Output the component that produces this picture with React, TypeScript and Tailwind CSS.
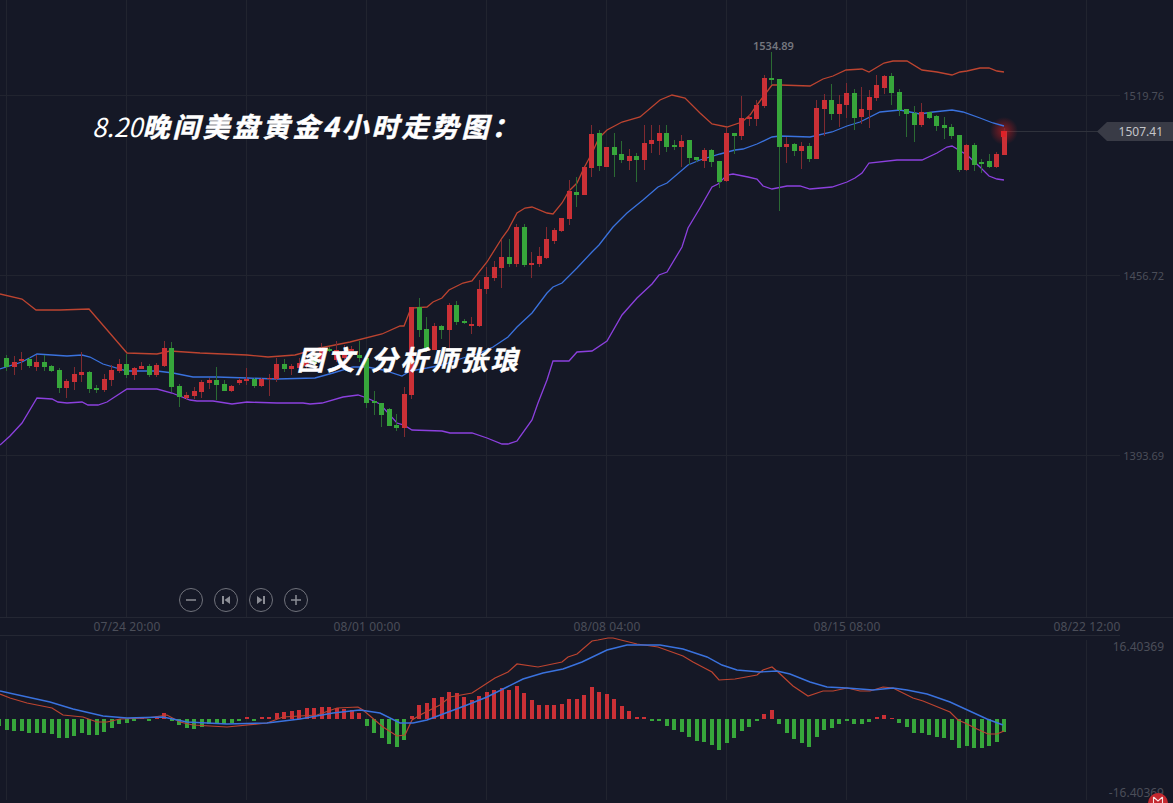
type Candle = [number, number, number, number, number, number];

// [up(1=red)/down(0=green), wick top, body top, body bottom, wick bottom]
const candleRows: [number, number, number, number, number][] = [
  [0, 355, 358, 367, 371], [1, 356, 362, 367, 375], [1, 352, 359, 361, 370], [0, 357, 359, 366, 368],
  [1, 355, 362, 367, 371], [0, 355, 362, 367, 371], [0, 365, 366, 371, 372], [0, 368, 370, 388, 393],
  [1, 379, 381, 388, 398], [1, 367, 374, 382, 390], [1, 352, 372, 375, 382], [0, 371, 372, 389, 393],
  [0, 385, 388, 390, 393], [1, 374, 379, 390, 392], [1, 365, 370, 380, 386], [1, 359, 364, 371, 373],
  [0, 354, 364, 375, 378], [1, 367, 368, 375, 380], [1, 362, 366, 369, 369], [0, 364, 366, 375, 377],
  [1, 363, 365, 375, 377], [1, 341, 348, 366, 367], [0, 342, 348, 387, 392], [0, 384, 386, 397, 407],
  [1, 392, 395, 398, 400], [1, 387, 391, 396, 399], [1, 380, 382, 392, 398], [1, 378, 380, 383, 389],
  [0, 367, 380, 385, 400], [0, 380, 384, 391, 391], [1, 385, 386, 391, 392], [1, 378, 380, 383, 385],
  [1, 368, 379, 381, 385], [0, 378, 379, 386, 388], [1, 378, 379, 386, 387], [1, 374, 378, 379, 396],
  [1, 358, 364, 379, 382], [0, 359, 364, 369, 372], [1, 364, 366, 369, 375], [1, 358, 363, 368, 373],
  [1, 360, 362, 366, 370], [0, 355, 358, 364, 368], [1, 343, 349, 360, 360], [0, 347, 349, 351, 352],
  [1, 341, 350, 360, 362], [1, 345, 351, 358, 360], [1, 346, 349, 351, 353], [0, 341, 355, 358, 362],
  [0, 358, 358, 403, 408], [0, 391, 401, 403, 415], [0, 403, 403, 415, 427], [0, 408, 409, 426, 426],
  [0, 414, 425, 428, 431], [1, 387, 394, 428, 437], [1, 307, 307, 395, 399], [0, 298, 307, 330, 337],
  [0, 317, 329, 350, 352], [1, 323, 326, 350, 350], [0, 325, 326, 330, 339], [1, 303, 305, 330, 350],
  [0, 301, 305, 322, 325], [0, 319, 321, 323, 324], [1, 317, 324, 326, 334], [1, 280, 289, 326, 327],
  [1, 267, 277, 289, 294], [1, 261, 267, 278, 281], [1, 240, 257, 268, 288], [0, 239, 257, 264, 267],
  [1, 224, 227, 264, 267], [0, 224, 227, 265, 267], [1, 252, 263, 265, 278], [1, 247, 256, 264, 267],
  [1, 227, 239, 258, 259], [1, 228, 230, 241, 244], [1, 218, 218, 231, 232], [1, 180, 191, 219, 225],
  [0, 177, 192, 195, 207], [1, 167, 167, 195, 195], [1, 125, 134, 168, 177], [0, 130, 133, 166, 171],
  [1, 147, 147, 167, 167], [0, 133, 147, 155, 177], [0, 141, 154, 160, 163], [1, 149, 156, 161, 170],
  [0, 153, 156, 160, 182], [1, 125, 143, 160, 170], [1, 125, 140, 144, 153], [1, 125, 133, 141, 155],
  [0, 125, 133, 147, 152], [0, 140, 145, 147, 150], [1, 135, 141, 147, 167], [0, 140, 140, 158, 165],
  [0, 157, 157, 160, 162], [1, 148, 150, 161, 168], [0, 149, 150, 162, 167], [0, 161, 161, 182, 188],
  [1, 128, 133, 181, 182], [0, 133, 133, 136, 154], [1, 96, 118, 136, 140], [1, 114, 117, 119, 126],
  [1, 100, 105, 119, 126], [1, 75, 78, 106, 108], [0, 52, 78, 80, 85], [0, 79, 79, 147, 211],
  [1, 137, 144, 147, 163], [0, 143, 144, 151, 156], [1, 142, 146, 151, 169], [0, 143, 146, 159, 162],
  [1, 100, 108, 159, 159], [1, 94, 100, 109, 136], [0, 84, 100, 114, 120], [1, 95, 104, 114, 127],
  [1, 83, 93, 105, 118], [0, 89, 93, 118, 130], [1, 87, 109, 117, 124], [1, 90, 97, 110, 128],
  [1, 75, 85, 98, 101], [1, 75, 76, 88, 94], [0, 73, 76, 93, 105], [0, 89, 92, 110, 116],
  [0, 109, 109, 114, 137], [0, 106, 113, 125, 142], [1, 103, 112, 125, 127], [0, 112, 112, 118, 119],
  [0, 115, 116, 126, 131], [0, 117, 125, 128, 139], [0, 124, 127, 136, 139], [0, 135, 135, 170, 172],
  [1, 144, 145, 170, 171], [0, 143, 145, 165, 171], [0, 159, 162, 164, 173], [0, 154, 161, 167, 168],
  [1, 152, 154, 167, 168], [1, 128, 131, 155, 155],
];

const candles: Candle[] = candleRows.map((row, i) => [6.5 + 7.5 * i, ...row]);

// macd bar heights, positive goes down (green), negative goes up (red)
const macdBars = [
  11, 12, 12, 14, 14, 14, 15, 19, 19, 17, 14, 16, 16, 13, 9, 5, 4, 2, -2, 2, -1, -6, 2, 6, 9, 10, 8, 5, 4, 5, 4, 2,
  -2, 2, -2, -2, -6, -7, -8, -9, -11, -11, -12, -12, -11, -10, -9, -6, 7, 14, 19, 25, 28, 21, -3, -14, -16, -21, -22, -27, -26, -22,
  -19, -23, -27, -29, -31, -29, -33, -26, -19, -14, -14, -14, -15, -20, -20, -24, -32, -27, -25, -20, -13, -8, -2, -2, 2, 2, 7, 11,
  13, 18, 22, 23, 26, 31, 24, 19, 12, 8, 2, -5, -9, 5, 14, 20, 24, 28, 18, 11, 9, 5, 2, 5, 5, 3, -2, -4, -1, 4,
  8, 14, 14, 16, 18, 19, 21, 29, 27, 29, 29, 27, 23, 13,
];

const upperBand = "0,294 22,299 36,310 60,310 89,309 127,353 157,354 170,351 200,353 247,355 268,357 295,355 320,348 350,342 382,334 400,326 404,326 411,308 427,307 433,302 442,298 449,290 463,283 472,281 487,262 502,238 508,230 517,213 525,208 532,207 547,213 553,214 562,203 569,191 577,183 584,168 592,153 599,138 607,130 622,122 640,117 660,100 672,95 685,98 700,113 712,124 727,127 742,122 750,115 757,105 772,85 780,85 810,86 823,79 833,76 846,70 862,69 869,72 884,63 893,61 907,61 922,70 937,72 952,75 960,72 967,71 980,68 989,68 997,71 1004,72";
const middleBand = "0,369 22,362 37,354 52,355 67,356 82,355 90,357 103,364 127,371 157,371 173,373 193,377 217,377 247,378 277,379 315,378 333,373 353,367 367,367 383,370 402,376 410,371 427,368 442,365 463,358 480,353 493,347 508,337 517,327 532,313 547,293 553,287 562,283 577,268 592,252 599,245 613,227 627,213 643,200 658,187 667,183 688,165 700,160 720,154 735,150 743,149 757,144 772,137 780,136 810,137 832,132 847,126 860,122 880,112 900,110 920,114 933,112 952,110 963,112 980,118 993,123 1004,126";
const lowerBand = "0,445 10,436 22,423 37,398 52,399 58,402 67,403 82,402 88,405 98,405 107,402 127,389 157,389 172,393 190,400 197,401 213,401 232,404 247,402 277,403 303,403 310,404 322,403 343,397 358,395 367,398 380,404 397,423 404,425 412,430 442,431 450,433 472,433 487,438 502,444 508,444 517,441 532,420 538,403 547,380 553,361 569,361 577,352 592,351 607,341 622,315 637,298 652,284 659,275 667,272 682,247 688,228 700,208 712,187 718,184 727,175 733,174 748,177 757,179 763,186 772,189 787,186 800,186 810,189 832,187 847,182 855,178 862,173 869,163 897,160 922,160 937,153 947,147 952,146 967,155 980,167 989,176 997,179 1004,180";

// y values here are relative to the macd panel, which starts at y=636
const shift = (pts: string) =>
  pts
    .split(" ")
    .map((p) => {
      const [x, y] = p.split(",").map(Number);
      return `${x},${y - 636}`;
    })
    .join(" ");

const macdBlue = shift("0,691 50,702 73,709 103,716 127,718 163,717 187,722 227,724 267,723 300,719 333,713 360,710 380,713 400,723 413,723 427,720 443,714 467,705 487,697 507,687 523,679 543,673 563,669 582,662 607,650 627,645 660,645 683,649 707,657 722,665 737,670 760,672 777,671 790,674 810,682 827,687 847,688 873,690 893,688 907,690 927,694 950,702 987,719 1003,725");
const macdRed = shift("0,694 10,698 27,703 52,708 63,715 83,717 97,722 107,722 120,719 147,718 167,715 180,722 193,725 227,727 267,723 283,717 317,715 337,708 358,707 363,710 383,727 397,736 405,735 412,720 422,714 440,705 450,697 472,693 495,678 508,672 517,664 538,667 562,662 568,657 577,654 592,641 598,640 608,638 613,638 637,644 658,647 683,656 693,662 712,672 719,680 735,679 757,675 763,670 772,667 778,672 793,686 808,696 823,691 833,691 847,688 860,691 870,691 883,687 893,688 913,698 923,701 950,712 958,720 965,723 977,729 988,734 997,734 1004,731");

const gridXs = [6.5, 126.5, 246.5, 366.5, 486.5, 606.5, 726.5, 846.5, 966.5, 1086.5];
const timeLabels = ["07/24 20:00", "08/01 00:00", "08/08 04:00", "08/15 08:00", "08/22 12:00"];
const priceLabels = ["1519.76", "1456.72", "1393.69"];
const brushFont = "font-['Noto_Sans_CJK_SC','Noto_Sans',sans-serif]";
const brushText = `text-[27px] leading-[38px] font-bold italic tracking-[3px] whitespace-nowrap text-white [-webkit-text-stroke:0.5px_white] ${brushFont}`;

function PriceChart() {
  return (
    <svg width={1173} height={617} className="block">
      <defs>
        <radialGradient id="lastGlow">
          <stop offset="0%" stopColor="#ff1f1f" stopOpacity={0.5} />
          <stop offset="100%" stopColor="#ff1f1f" stopOpacity={0} />
        </radialGradient>
      </defs>
      {gridXs.map((x) => (
        <line key={x} x1={x} x2={x} y1={0} y2={617} stroke="#21242f" />
      ))}
      {[95.5, 275.5, 455.5].map((y) => (
        <line key={y} x1={0} x2={1120} y1={y} y2={y} stroke="#21242f" />
      ))}
      <line x1={1004} x2={1100} y1={131.5} y2={131.5} stroke="#2f323c" />
      <circle cx={1004} cy={131} r={14} fill="url(#lastGlow)" />
      <polyline points={upperBand} fill="none" stroke="#bd4430" strokeWidth={1.3} />
      <polyline points={middleBand} fill="none" stroke="#3a72de" strokeWidth={1.3} />
      <polyline points={lowerBand} fill="none" stroke="#8c40de" strokeWidth={1.3} />
      {candles.map(([x, up, wt, bt, bb, wb]) => {
        const left = Math.round(x - 2.5);
        return (
          <g key={x}>
            <rect x={left + 2} y={wt} width={1} height={wb - wt} fill={up ? "#7f2a30" : "#2b6a33"} />
            <rect x={left} y={bt} width={5} height={Math.max(bb - bt, 1)} fill={up ? "#cb3036" : "#37a63b"} />
          </g>
        );
      })}
      <rect x={1001} y={131} width={5} height={6} fill="#dd2228" />
    </svg>
  );
}

function MacdChart() {
  return (
    <svg width={1173} height={167} className="block">
      {gridXs.map((x) => (
        <line key={x} x1={x} x2={x} y1={4} y2={164} stroke="#21242f" />
      ))}
      {macdBars.map((h, i) => (
        <rect
          key={i}
          x={Math.round(6.5 + 7.5 * i - 2)}
          y={h < 0 ? 83 + h : 83}
          width={4}
          height={Math.abs(h)}
          fill={h < 0 ? "#cb3036" : "#37a63b"}
        />
      ))}
      <rect x={-3} y={83} width={4} height={7} fill="#37a63b" />
      <polyline points={macdRed} fill="none" stroke="#bd4430" strokeWidth={1.2} />
      <polyline points={macdBlue} fill="none" stroke="#3a72de" strokeWidth={1.4} />
    </svg>
  );
}

function ZoomButtons() {
  const btn =
    "flex h-6 w-6 items-center justify-center rounded-full border border-[#70727b] text-[#8b8d95]";
  return (
    <div className="absolute bottom-[5px] left-[179px] flex gap-[11px]">
      <div className={btn}>
        <svg width={12} height={12} viewBox="0 0 12 12">
          <path d="M1 6h10" stroke="currentColor" strokeWidth={1.5} />
        </svg>
      </div>
      <div className={btn}>
        <svg width={12} height={12} viewBox="0 0 12 12">
          <path d="M2 2h2v8H2zM10 2v8L4.5 6z" fill="currentColor" />
        </svg>
      </div>
      <div className={btn}>
        <svg width={12} height={12} viewBox="0 0 12 12">
          <path d="M10 2H8v8h2zM2 2v8l5.5-4z" fill="currentColor" />
        </svg>
      </div>
      <div className={btn}>
        <svg width={12} height={12} viewBox="0 0 12 12">
          <path d="M1 6h10M6 1v10" stroke="currentColor" strokeWidth={1.5} />
        </svg>
      </div>
    </div>
  );
}

export default function App() {
  return (
    <div className="flex h-[803px] w-[1173px] flex-col overflow-hidden bg-[#151826] font-['Noto_Sans','Open_Sans',sans-serif]">
      <section className="relative h-[617px]">
        <PriceChart />

        <p className={`absolute left-[92px] top-[107px] ${brushText}`}>
          <span className="text-[26px] font-normal tracking-normal [-webkit-text-stroke:0px]">8.20</span>
          晚间美盘黄金4小时走势图：
        </p>
        <p className={`absolute left-[297px] top-[340px] ${brushText}`}>图文/分析师张琅</p>

        <span className="absolute left-[753px] top-[38px] text-[11px] leading-4 font-semibold text-[#74767e]">1534.89</span>

        <div className="absolute right-[9px] top-[88px] flex flex-col gap-[164px] text-[11px] leading-4 text-[#4b4e59]">
          {priceLabels.map((label) => (
            <span key={label}>{label}</span>
          ))}
        </div>

        <div className="absolute right-0 top-[122px] flex h-[19px] w-[76px] items-center justify-end bg-[#393b46] pr-[10px] text-xs text-[#c4c5c9] [clip-path:polygon(10px_0,100%_0,100%_100%,10px_100%,0_50%)]">
          1507.41
        </div>

        <ZoomButtons />
      </section>

      <div className="h-px bg-[#242733]" />

      <div className="flex h-[17px] w-[1120px] items-center pl-[7px] text-xs tracking-[0.1px] text-[#4b4e59]">
        {timeLabels.map((label) => (
          <span key={label} className="w-[240px] shrink-0 text-center leading-none">
            {label}
          </span>
        ))}
      </div>

      <div className="h-px w-[1120px] bg-[#242733]" />

      <section className="relative flex-1">
        <MacdChart />
        <div className="absolute inset-y-0 right-[9px] flex flex-col items-end justify-between pt-[3px] pb-[2px] text-xs leading-4 text-[#4b4e59]">
          <span>16.40369</span>
          <span>-16.40369</span>
        </div>
        <div className="absolute bottom-[-10px] right-[5px] flex h-5 w-5 items-start justify-center rounded-full bg-[#c4282f] pt-[3px]">
          <svg width={12} height={9} viewBox="0 0 12 9">
            <path d="M1.5 1v7M10.5 1v7M1.5 1 6 5l4.5-4M1.5 8h9" fill="none" stroke="#f7e3e3" strokeWidth={1.1} />
          </svg>
        </div>
      </section>
    </div>
  );
}
